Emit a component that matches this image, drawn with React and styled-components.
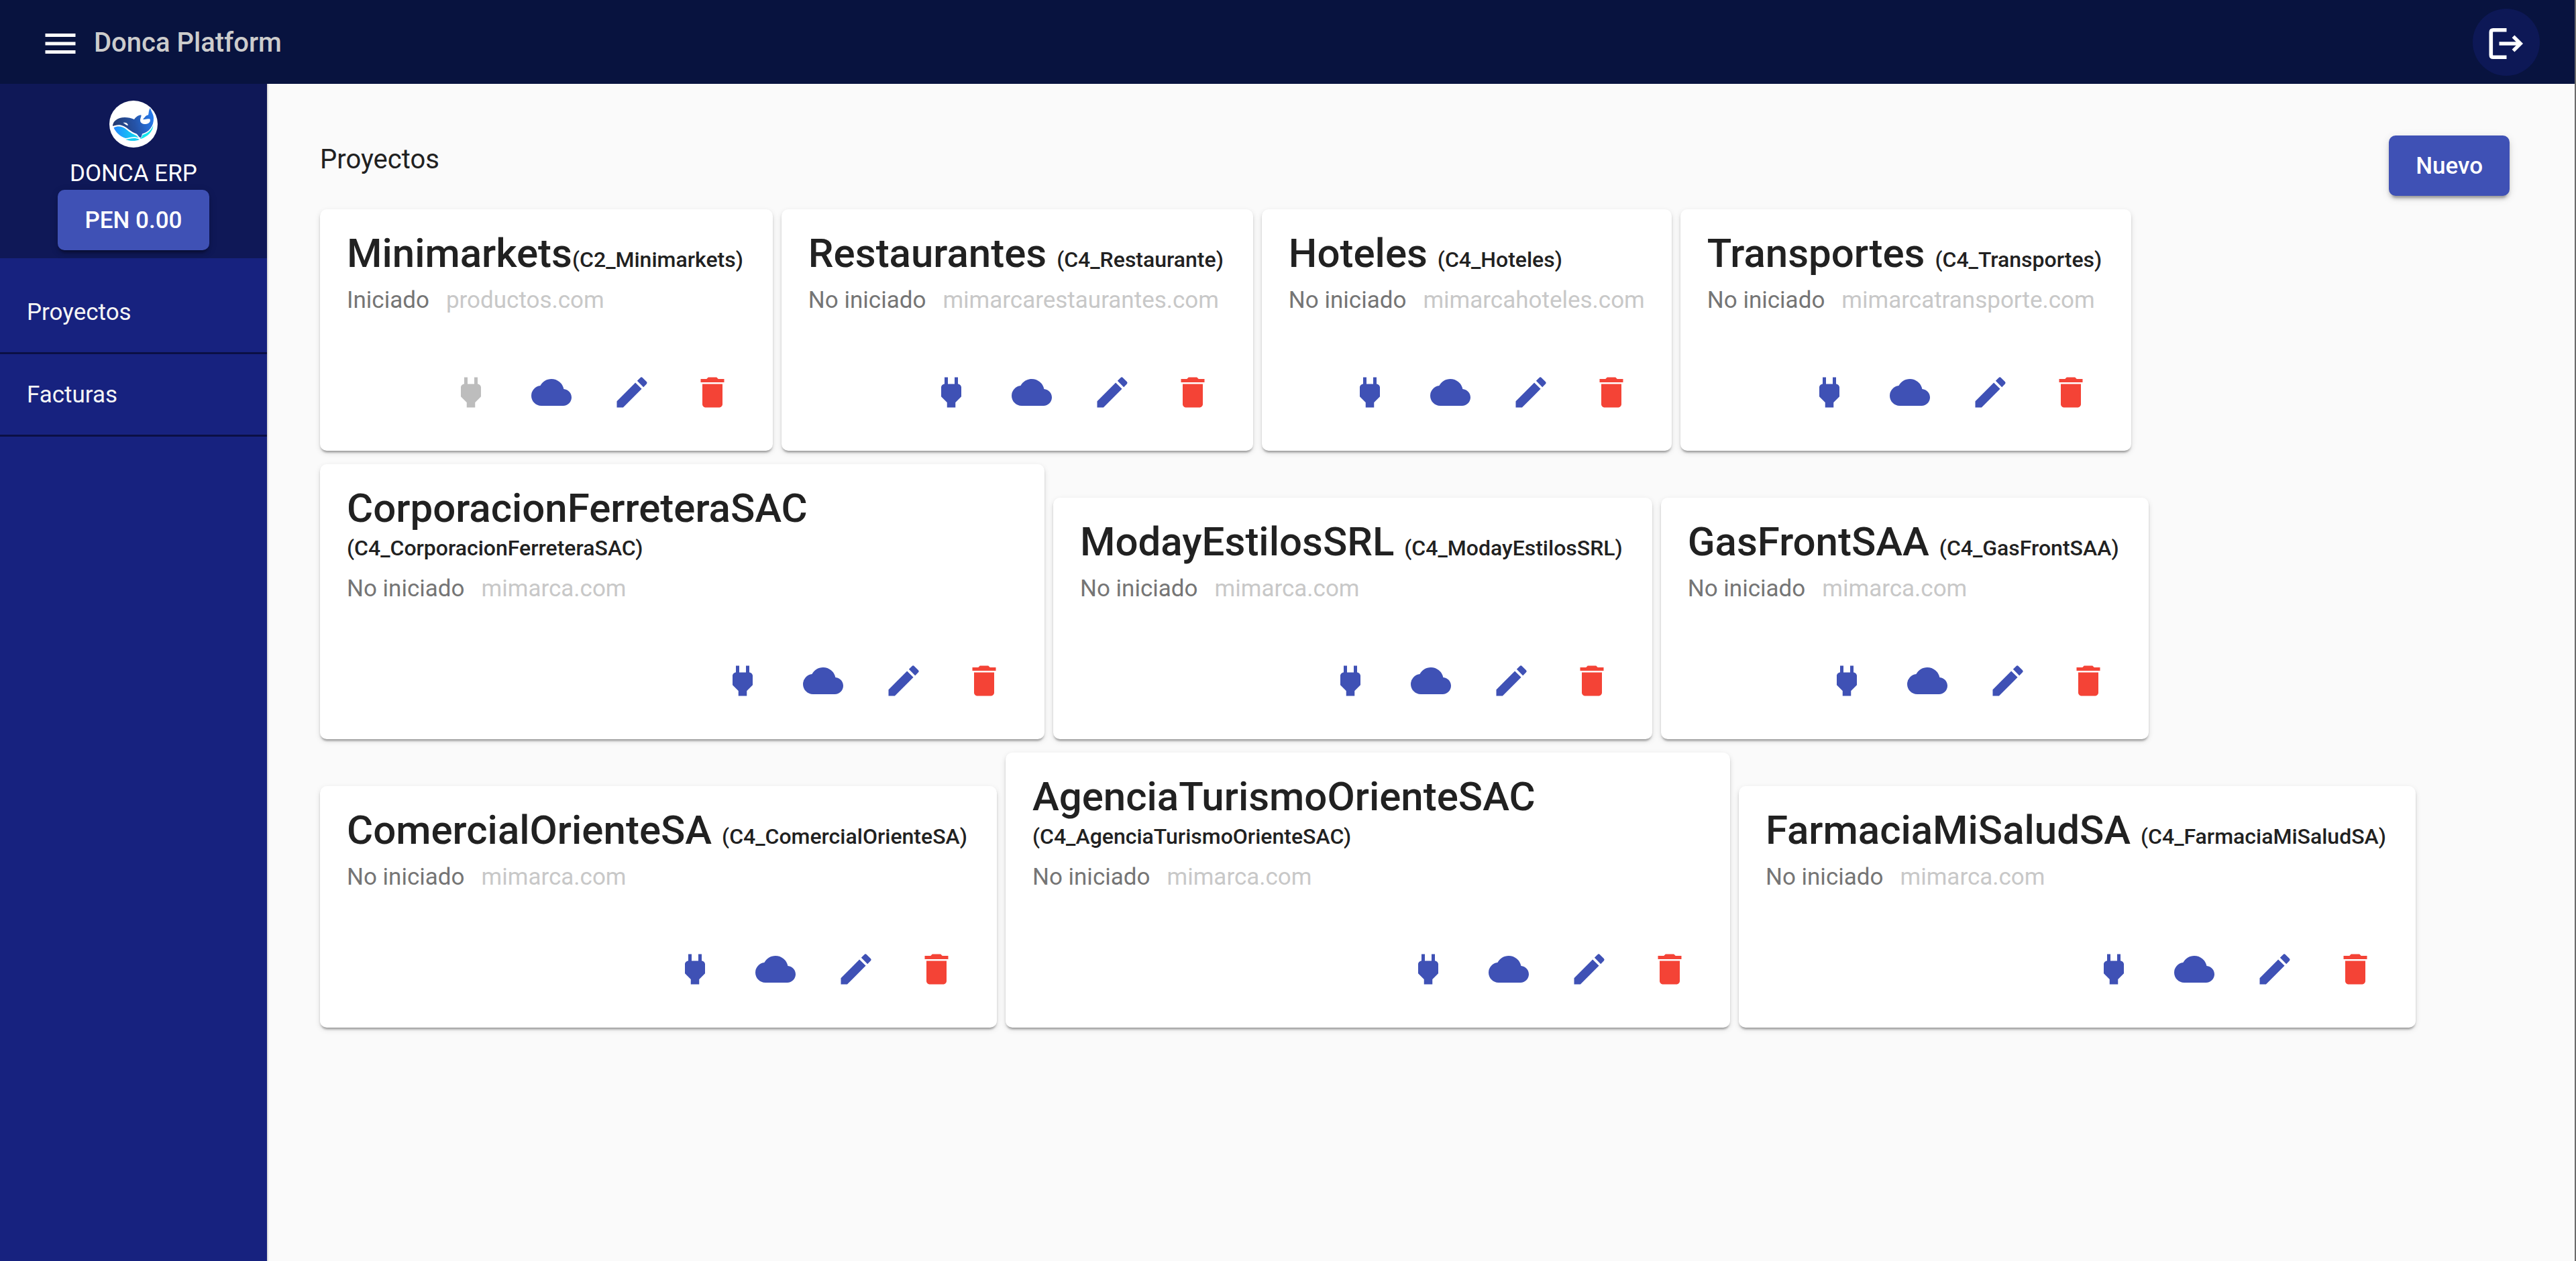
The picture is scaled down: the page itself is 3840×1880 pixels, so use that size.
import React from "react";
import styled, { createGlobalStyle } from "styled-components";
import { MdMenu, MdPower, MdCloud, MdEdit, MdDelete } from "react-icons/md";

const GlobalStyle = createGlobalStyle`
  *, *::before, *::after { box-sizing: border-box; }
  body { margin: 0; background: #fafafa; }
  body, button { font-family: Roboto, "Noto Sans", sans-serif; }
  button { border: 0; padding: 0; cursor: pointer; }
  h1, h2, p { margin: 0; }
`;

const Page = styled.div`
  min-height: 100vh;
  display: flex;
  flex-direction: column;
  border-right: 2px solid #6b6b6b;
`;

const TopBar = styled.header`
  height: 125px;
  padding: 0 52px 0 60px;
  display: flex;
  align-items: center;
  gap: 20px;
  background: #08133f;
  color: #fff;
`;

const MenuButton = styled.button`
  display: flex;
  padding-top: 5px;
  background: none;
  color: #fff;
  font-size: 60px;
`;

const Brand = styled.span`
  flex: 1;
  padding-top: 2px;
  color: #ccc;
  font-size: 40px;
  font-weight: 500;
  line-height: 50px;
`;

const LogoutButton = styled.button`
  width: 100px;
  height: 100px;
  padding-top: 4px;
  display: flex;
  align-items: center;
  justify-content: center;
  border-radius: 50%;
  background: #0d1856;
`;

const Body = styled.div`
  flex: 1;
  display: flex;
`;

const Sidebar = styled.aside`
  width: 400px;
  flex: none;
  border-right: 2px solid #dedede;
  background: #17227f;
  color: #fff;
`;

const Account = styled.div`
  padding: 25px 0 12px;
  display: flex;
  flex-direction: column;
  align-items: center;
  background: #0f1857;
`;

const AccountName = styled.p`
  padding: 19px 0 4px;
  font-size: 35px;
  line-height: 40px;
`;

const RaisedButton = styled.button`
  height: 90px;
  padding: 0 40px;
  border-radius: 10px;
  background: #3f51b5;
  color: #fff;
  font-size: 35px;
  font-weight: 500;
  box-shadow: 0 8px 3px -5px rgba(0, 0, 0, 0.2),
    0 5px 5px 0 rgba(0, 0, 0, 0.14), 0 3px 13px 0 rgba(0, 0, 0, 0.12);
`;

const Nav = styled.nav`
  padding-top: 20px;
  display: flex;
  flex-direction: column;
`;

const NavLink = styled.a`
  padding: 41px 40px 39px;
  border-bottom: 3px solid #0b1045;
  color: #f5f5f5;
  font-size: 35px;
  line-height: 40px;
  text-decoration: none;
`;

const Main = styled.main`
  flex: 1;
  min-width: 0;
  padding: 77px;
`;

const MainHeader = styled.div`
  padding-right: 20px;
  margin-bottom: 20px;
  display: flex;
  align-items: flex-start;
  justify-content: space-between;
`;

const Heading = styled.h1`
  padding-top: 11px;
  color: #212121;
  font-size: 40px;
  font-weight: 400;
  line-height: 50px;
`;

const Cards = styled.div`
  display: flex;
  flex-wrap: wrap;
  align-items: flex-end;
  gap: 20px 13px;
`;

const Card = styled.article`
  max-width: 1080px;
  padding: 41px 40px 37px;
  border-radius: 10px;
  background: #fff;
  box-shadow: 0 5px 3px -3px rgba(0, 0, 0, 0.2),
    0 3px 3px 0 rgba(0, 0, 0, 0.14), 0 3px 8px 0 rgba(0, 0, 0, 0.12);
`;

const CardTitle = styled.h2`
  color: #212121;
  font-size: 60px;
  font-weight: 500;
  line-height: 50px;
`;

const Code = styled.span`
  padding-right: 4px;
  font-size: 32px;
  line-height: 32px;
`;

const Status = styled.p`
  margin-top: 25px;
  display: flex;
  gap: 25px;
  color: #757575;
  font-size: 35px;
  line-height: 40px;
`;

const Domain = styled.span`
  color: #c8c8c8;
`;

const Actions = styled.div`
  margin-top: 67px;
  display: flex;
  justify-content: flex-end;
  gap: 20px;
`;

const tones = { primary: "#3f51b5", warn: "#f44336", disabled: "#bdbdbd" };

const IconButton = styled.button`
  width: 100px;
  height: 100px;
  display: flex;
  align-items: center;
  justify-content: center;
  border-radius: 50%;
  background: none;
  color: ${({ $tone }) => tones[$tone]};
  font-size: 60px;
`;

function WhaleLogo() {
  return (
    <svg width="72" height="70" viewBox="0 0 72 70" role="img" aria-label="Donca">
      <defs>
        <linearGradient id="back" x1="0" x2="1" y1="0.4" y2="0.2">
          <stop offset="0" stopColor="#243a70" />
          <stop offset="0.5" stopColor="#2553a8" />
          <stop offset="1" stopColor="#2780f5" />
        </linearGradient>
        <linearGradient id="sea" x1="0" x2="1">
          <stop offset="0" stopColor="#2487ff" />
          <stop offset="1" stopColor="#10e0f0" />
        </linearGradient>
      </defs>
      <ellipse cx="36" cy="35" rx="36" ry="35" fill="#fff" />
      <path
        fill="url(#back)"
        d="M5 38C5 31 12 25 23 25C28 25 33 26 37 28C40 24 43 21.500 47.500 21.500C48 24 46 26 46 29C46 33 49 35 54 35C59 35 62 31 60.500 27.500C57 26.500 53 29 50 27.500C53 26 53 22 58 21.500C59 18 58.500 14 61 11C62 16 66 20 66 26C66.500 38 59 47 49 49.500C48.500 51.500 48 54 46.500 55.500C43.500 54 42.500 51 40.500 49.500C32 47 25 38 17 36.500C12 35.500 8 37 5 38Z"
      />
      <path fill="#fff" d="M20.500 33C24 32 27.500 33.500 28 37C25 37.500 23.500 34.500 20.500 33Z" />
      <path
        fill="url(#sea)"
        d="M6.500 40.500C13 37 20 38.500 26 43.500C32 48.500 36 50 40 52C41.500 53 42.500 54.500 43.500 55.500C36 52.500 30 55.500 24 56C17 54 10 48 6.500 40.500Z"
      />
      <path fill="#12e6ee" d="M49.500 51C58 49 63 43 65.500 36.500C65 46 57 54 47 57L45.500 56.500C48 55.500 49 53.500 49.500 51Z" />
      <path fill="#16cdf3" d="M24 58C31 57.500 36 54 45 58C39 61 30 60.500 24 58Z" />
    </svg>
  );
}

function LogoutIcon() {
  return (
    <svg width="60" height="60" viewBox="0 0 60 60" fill="none" stroke="#fff" aria-hidden="true">
      <path strokeWidth="5.600" d="M30.500 9.800H10.500Q7.300 9.800 7.300 13V47Q7.300 50.200 10.500 50.200H30.500" />
      <path strokeWidth="5.400" d="M19.500 30H51" />
      <path strokeWidth="5.400" d="M40.500 19.300L51.200 30L40.500 40.700" />
    </svg>
  );
}

const projects = [
  { name: "Minimarkets", code: "C2_Minimarkets", domain: "productos.com", started: true },
  { name: "Restaurantes ", code: "C4_Restaurante", domain: "mimarcarestaurantes.com" },
  { name: "Hoteles ", code: "C4_Hoteles", domain: "mimarcahoteles.com" },
  { name: "Transportes ", code: "C4_Transportes", domain: "mimarcatransporte.com" },
  { name: "CorporacionFerreteraSAC ", code: "C4_CorporacionFerreteraSAC", domain: "mimarca.com" },
  { name: "ModayEstilosSRL ", code: "C4_ModayEstilosSRL", domain: "mimarca.com" },
  { name: "GasFrontSAA ", code: "C4_GasFrontSAA", domain: "mimarca.com" },
  { name: "ComercialOrienteSA ", code: "C4_ComercialOrienteSA", domain: "mimarca.com" },
  { name: "AgenciaTurismoOrienteSAC ", code: "C4_AgenciaTurismoOrienteSAC", domain: "mimarca.com" },
  { name: "FarmaciaMiSaludSA ", code: "C4_FarmaciaMiSaludSA", domain: "mimarca.com" },
];

function ProjectCard({ name, code, domain, started }) {
  return (
    <Card>
      <CardTitle>
        {name}
        <Code>({code})</Code>
      </CardTitle>
      <Status>
        <span>{started ? "Iniciado" : "No iniciado"}</span>
        <Domain>{domain}</Domain>
      </Status>
      <Actions>
        <IconButton $tone={started ? "disabled" : "primary"} disabled={started} aria-label="Iniciar">
          <MdPower />
        </IconButton>
        <IconButton $tone="primary" aria-label="Nube">
          <MdCloud />
        </IconButton>
        <IconButton $tone="primary" aria-label="Editar">
          <MdEdit />
        </IconButton>
        <IconButton $tone="warn" aria-label="Eliminar">
          <MdDelete />
        </IconButton>
      </Actions>
    </Card>
  );
}

export default function App() {
  return (
    <Page>
      <GlobalStyle />
      <TopBar>
        <MenuButton aria-label="Menú">
          <MdMenu />
        </MenuButton>
        <Brand>Donca Platform</Brand>
        <LogoutButton aria-label="Salir">
          <LogoutIcon />
        </LogoutButton>
      </TopBar>
      <Body>
        <Sidebar>
          <Account>
            <WhaleLogo />
            <AccountName>DONCA ERP</AccountName>
            <RaisedButton>PEN 0.00</RaisedButton>
          </Account>
          <Nav>
            <NavLink href="#proyectos">Proyectos</NavLink>
            <NavLink href="#facturas">Facturas</NavLink>
          </Nav>
        </Sidebar>
        <Main>
          <MainHeader>
            <Heading>Proyectos</Heading>
            <RaisedButton>Nuevo</RaisedButton>
          </MainHeader>
          <Cards>
            {projects.map((project) => (
              <ProjectCard key={project.code} {...project} />
            ))}
          </Cards>
        </Main>
      </Body>
    </Page>
  );
}
